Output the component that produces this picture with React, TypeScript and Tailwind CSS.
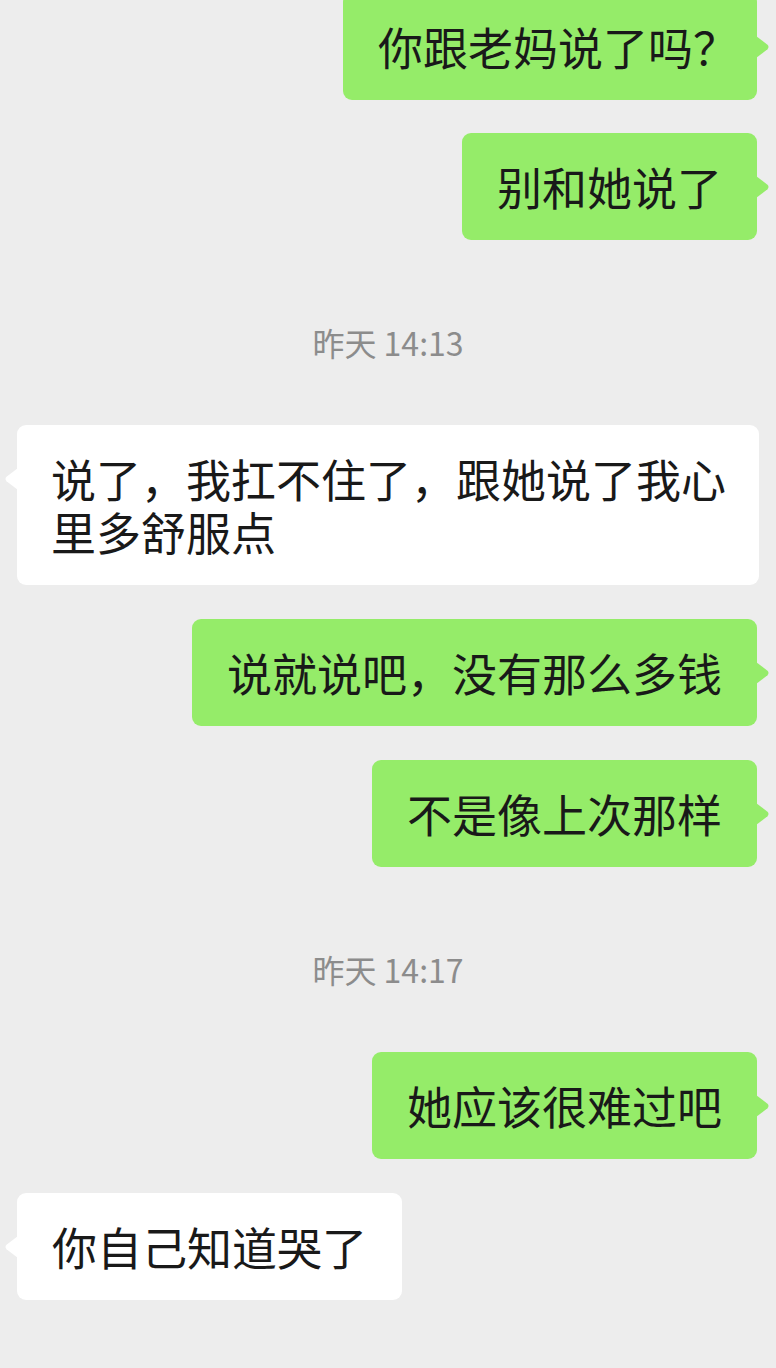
import React from 'react';

type Msg =
  | { kind: 'me' | 'them'; text: React.ReactNode; gap: string; wide?: boolean }
  | { kind: 'time'; text: string };

const messages: Msg[] = [
  { kind: 'me', text: <>你跟老妈说了吗<span className="tracking-[-16px]">？</span></>, gap: 'mt-[-7px]' },
  { kind: 'me', text: '别和她说了', gap: 'mt-[33px]' },
  { kind: 'time', text: '昨天 14:13' },
  { kind: 'them', text: '说了，我扛不住了，跟她说了我心里多舒服点', gap: 'mt-[63px]', wide: true },
  { kind: 'me', text: '说就说吧，没有那么多钱', gap: 'mt-[34px]' },
  { kind: 'me', text: '不是像上次那样', gap: 'mt-[34px]' },
  { kind: 'time', text: '昨天 14:17' },
  { kind: 'me', text: '她应该很难过吧', gap: 'mt-[63px]' },
  { kind: 'them', text: '你自己知道哭了', gap: 'mt-[34px]' },
];

const Tail: React.FC<{ side: 'left' | 'right' }> = ({ side }) => (
  <svg
    width="14"
    height="22"
    viewBox="0 0 14 22"
    className={`absolute top-[43px] ${side === 'right' ? 'right-[-13px] fill-[#95ec69]' : 'left-[-13px] fill-white -scale-x-100'}`}
  >
    <path d="M0 0 L11.5 8.8 Q13.5 11 11.5 13.2 L0 22 Z" />
  </svg>
);

const Bubble: React.FC<{ mine: boolean; wide?: boolean; children: React.ReactNode }> = ({ mine, wide, children }) => (
  <div
    className={`relative rounded-[9px] py-[27px] text-[45px] leading-[53px] text-[#191919] ${
      mine ? 'mr-[2px] bg-[#95ec69]' : 'bg-white'
    } ${wide ? 'pl-[34px] pr-[32px]' : 'px-[35px]'}`}
  >
    {children}
    <Tail side={mine ? 'right' : 'left'} />
  </div>
);

export default function App() {
  return (
    <div
      className="w-[776px] h-[1368px] overflow-hidden bg-[#ededed] px-[17px]"
      style={{ fontFamily: '"Noto Sans CJK SC", "Noto Sans", sans-serif' }}
    >
      <div className="flex flex-col">
        {messages.map((m, i) =>
          m.kind === 'time' ? (
            <div key={i} className="mt-[82px] h-[40px] flex items-center justify-center text-[32px] text-[#8c8c8c]">
              {m.text}
            </div>
          ) : (
            <div key={i} className={`flex ${m.kind === 'me' ? 'justify-end' : 'justify-start'} ${m.gap}`}>
              <Bubble mine={m.kind === 'me'} wide={m.wide}>{m.text}</Bubble>
            </div>
          )
        )}
      </div>
    </div>
  );
}
